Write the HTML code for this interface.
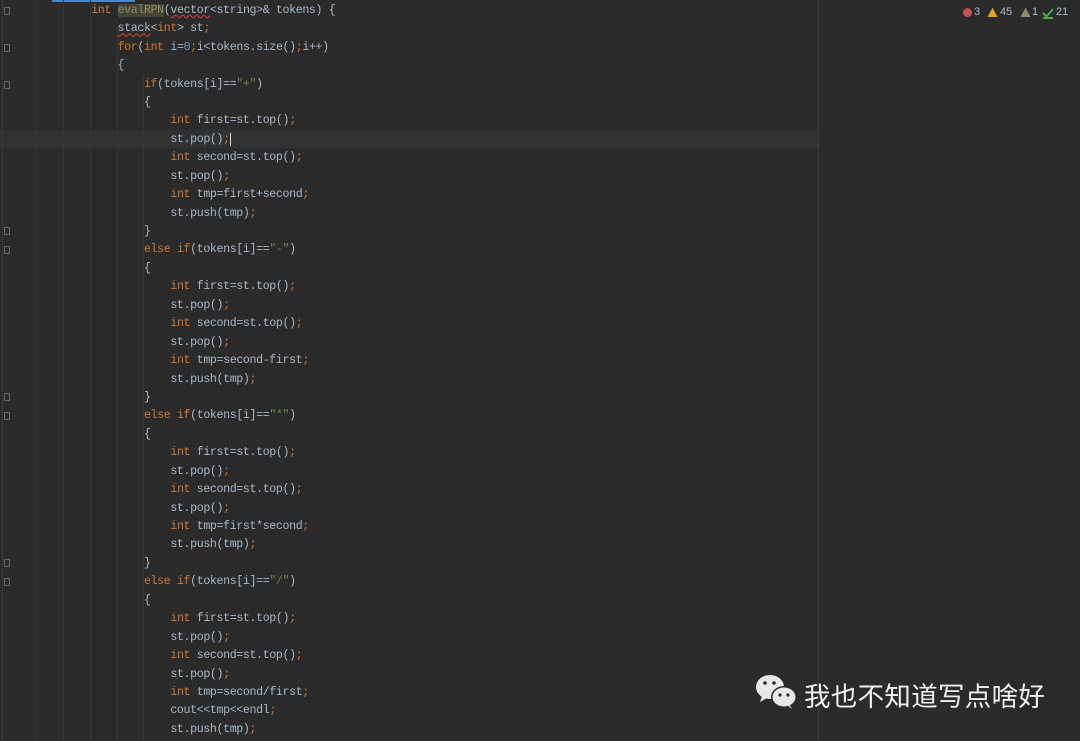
<!DOCTYPE html>
<html><head><meta charset="utf-8"><style>
body{margin:0;width:1080px;height:741px;background:#2b2b2b;overflow:hidden;position:relative;font-family:"Liberation Mono",monospace}
pre{position:absolute;left:12px;top:1.8px;margin:0;font-size:11.6px;letter-spacing:-0.36px;line-height:18.44px;color:#a9b7c6;font-family:"Liberation Mono",monospace;z-index:2}
.k{color:#cc7832}.s{color:#6a8759}.n{color:#6897bb}
.g{position:absolute;top:0;height:741px;width:1px;background:#363636}
.hl{position:absolute;left:0;width:818px;top:130px;height:18px;background:#323232}
.f{position:absolute;left:4px;width:6px;height:8px;border:1px solid #6a6a6a;border-radius:1px;box-sizing:border-box}
.w{position:absolute;font-family:"Liberation Sans",sans-serif;font-size:11px;color:#a9b7c6;top:6px}
</style></head><body>
<div style="position:absolute;left:52px;top:0;width:83px;height:2px;background:#4a88c7"></div>
<div class="hl"></div>
<div class="g" style="left:2px;background:#3a3a3a"></div>
<div class="g" style="left:36px"></div><div class="g" style="left:63px"></div><div class="g" style="left:90px"></div>
<div class="g" style="left:117px;top:20px;height:721px"></div>
<div class="g" style="left:143px;top:75px;height:666px"></div>
<div class="g" style="left:818px;background:#3c3c3c"></div>
<div class="f" style="top:7px"></div><div class="f" style="top:44px"></div><div class="f" style="top:81px"></div>
<div class="f" style="top:227px"></div><div class="f" style="top:246px"></div>
<div class="f" style="top:393px"></div><div class="f" style="top:412px"></div>
<div class="f" style="top:559px"></div><div class="f" style="top:578px"></div>
<pre>            <span class="k">int</span> <span style="background:#474536;color:#8c8c6a">evalRPN</span>(<span style="text-decoration:underline wavy #bc3f3c">vector</span>&lt;string&gt;&amp; tokens) {
                <span style="text-decoration:underline wavy #bc3f3c">stack</span>&lt;<span class="k">int</span>&gt; st<span class="k">;</span>
                <span class="k">for</span>(<span class="k">int</span> i=<span class="n">0</span><span class="k">;</span>i&lt;tokens.size()<span class="k">;</span>i++)
                {
                    <span class="k">if</span>(tokens[i]==<span class="s">"+"</span>)
                    {
                        <span class="k">int</span> first=st.top()<span class="k">;</span>
                        st.pop()<span class="k">;</span><span style="border-left:1px solid #ddd"></span>
                        <span class="k">int</span> second=st.top()<span class="k">;</span>
                        st.pop()<span class="k">;</span>
                        <span class="k">int</span> tmp=first+second<span class="k">;</span>
                        st.push(tmp)<span class="k">;</span>
                    }
                    <span class="k">else if</span>(tokens[i]==<span class="s">"-"</span>)
                    {
                        <span class="k">int</span> first=st.top()<span class="k">;</span>
                        st.pop()<span class="k">;</span>
                        <span class="k">int</span> second=st.top()<span class="k">;</span>
                        st.pop()<span class="k">;</span>
                        <span class="k">int</span> tmp=second-first<span class="k">;</span>
                        st.push(tmp)<span class="k">;</span>
                    }
                    <span class="k">else if</span>(tokens[i]==<span class="s">"*"</span>)
                    {
                        <span class="k">int</span> first=st.top()<span class="k">;</span>
                        st.pop()<span class="k">;</span>
                        <span class="k">int</span> second=st.top()<span class="k">;</span>
                        st.pop()<span class="k">;</span>
                        <span class="k">int</span> tmp=first*second<span class="k">;</span>
                        st.push(tmp)<span class="k">;</span>
                    }
                    <span class="k">else if</span>(tokens[i]==<span class="s">"/"</span>)
                    {
                        <span class="k">int</span> first=st.top()<span class="k">;</span>
                        st.pop()<span class="k">;</span>
                        <span class="k">int</span> second=st.top()<span class="k">;</span>
                        st.pop()<span class="k">;</span>
                        <span class="k">int</span> tmp=second/first<span class="k">;</span>
                        cout&lt;&lt;tmp&lt;&lt;endl<span class="k">;</span>
                        st.push(tmp)<span class="k">;</span></pre>
<div style="position:absolute;left:963px;top:8px;width:9px;height:9px;border-radius:50%;background:#c74e4e"></div>
<div class="w" style="left:974px">3</div>
<svg style="position:absolute;left:987px;top:7px" width="11" height="11"><path d="M5.5 0.5L10.5 10H0.5Z" fill="#e0a41f"/></svg>
<div class="w" style="left:1000px">45</div>
<svg style="position:absolute;left:1020px;top:7px" width="11" height="11"><path d="M5.5 0.5L10.5 10H0.5Z" fill="#8a8a6e"/></svg>
<div class="w" style="left:1032px">1</div>
<svg style="position:absolute;left:1042px;top:7px" width="12" height="12"><path d="M1 6L4.5 9.5L11 2M1 11H11" stroke="#4fa64f" stroke-width="2" fill="none"/></svg>
<div class="w" style="left:1056px">21</div>
<svg style="position:absolute;left:754px;top:672px" width="46" height="40">
<ellipse cx="16" cy="15" rx="14" ry="12" fill="#e8e8e8"/><path d="M8 24L6 30L13 26Z" fill="#e8e8e8"/>
<ellipse cx="30" cy="25" rx="13" ry="11" fill="#2b2b2b"/><ellipse cx="30" cy="25" rx="11.5" ry="9.5" fill="#e8e8e8"/><path d="M35 32L38 37L33 33Z" fill="#e8e8e8"/>
<circle cx="11" cy="11" r="1.8" fill="#2b2b2b"/><circle cx="20" cy="11" r="1.8" fill="#2b2b2b"/>
<circle cx="26" cy="23" r="1.6" fill="#2b2b2b"/><circle cx="34" cy="23" r="1.6" fill="#2b2b2b"/></svg>
<div style="position:absolute;left:804px;top:675px;font-family:'Liberation Sans','Noto Sans CJK SC',sans-serif;font-size:26.5px;color:#f0f0f0;letter-spacing:0.3px">我也不知道写点啥好</div>
</body></html>
